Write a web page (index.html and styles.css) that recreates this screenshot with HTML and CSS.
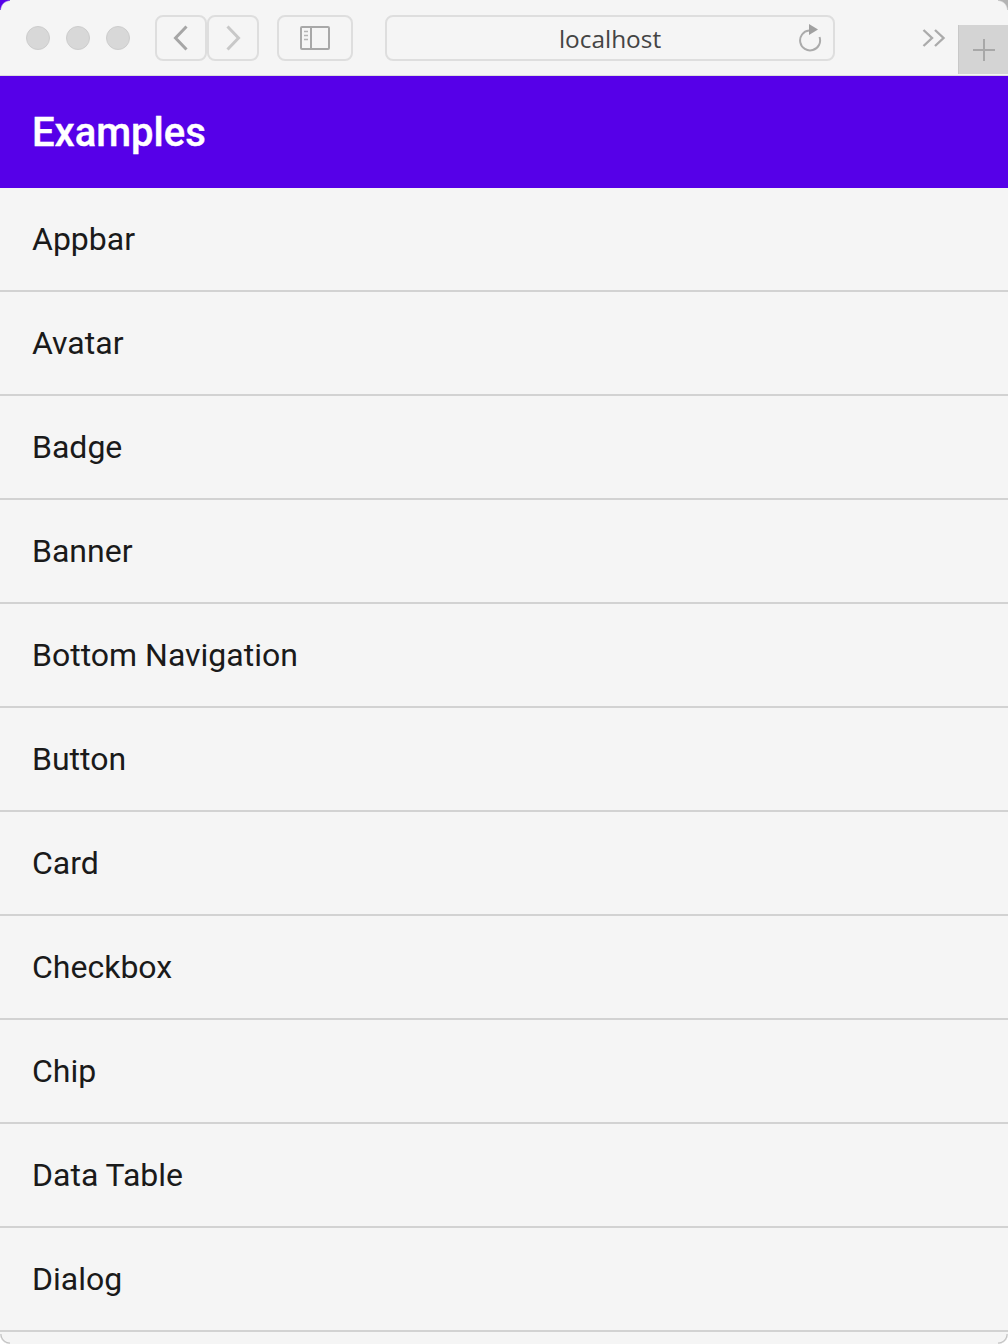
FILE: index.html

```html
<!DOCTYPE html>
<html lang="en">
<head>
	<meta charset="UTF-8" />
	<title>Examples</title>
	<link rel="stylesheet" href="styles.css">
</head>
<body>
	<!-- Browser toolbar -->
	<div class="toolbar">
		<div class="lights">
			<span class="light"></span>
			<span class="light"></span>
			<span class="light"></span>
		</div>
		<div class="nav-buttons">
			<div class="tool-btn nav-btn">
				<svg width="16" height="26" viewBox="0 0 16 26"><path d="M13.5 1.5 L2.5 13 L13.5 24.5" fill="none" stroke="#a6a6a6" stroke-width="3"/></svg>
			</div>
			<div class="tool-btn nav-btn">
				<svg width="16" height="26" viewBox="0 0 16 26"><path d="M2.5 1.5 L13.5 13 L2.5 24.5" fill="none" stroke="#c8c8c8" stroke-width="3"/></svg>
			</div>
		</div>
		<div class="tool-btn sidebar-btn">
			<svg width="30" height="24" viewBox="0 0 30 24">
				<rect x="1" y="1" width="28" height="22" rx="1" fill="none" stroke="#a8a8a8" stroke-width="2"/>
				<path d="M11 1 V23" stroke="#a8a8a8" stroke-width="2"/>
				<path d="M4 5.5 H8 M4 9.5 H8 M4 13.5 H8" stroke="#b4b4b4" stroke-width="1.6"/>
			</svg>
		</div>
		<div class="address">
			<span class="address-text">localhost</span>
			<svg class="reload" width="24" height="30" viewBox="0 0 24 30">
				<path d="M11 7.5 A10 10 0 1 0 21.5 14" fill="none" stroke="#ababab" stroke-width="2"/>
				<path d="M11 1 L20 6.5 L11 12 Z" fill="#a0a0a0"/>
			</svg>
		</div>
		<svg class="more" width="24" height="20" viewBox="0 0 24 20">
			<path d="M1.5 2 L10 10 L1.5 18 M13 2 L21.5 10 L13 18" fill="none" stroke="#ababab" stroke-width="2.4"/>
		</svg>
		<div class="new-tab">
			<svg width="24" height="24" viewBox="0 0 24 24"><path d="M12 1 V23 M1 12 H23" stroke="#a8a8a8" stroke-width="2"/></svg>
		</div>
	</div>

	<!-- App -->
	<header class="appbar">
		<h1 class="title">Examples</h1>
	</header>
	<ul class="list">
		<li class="list-item">Appbar</li>
		<li class="list-item">Avatar</li>
		<li class="list-item">Badge</li>
		<li class="list-item">Banner</li>
		<li class="list-item">Bottom Navigation</li>
		<li class="list-item">Button</li>
		<li class="list-item">Card</li>
		<li class="list-item">Checkbox</li>
		<li class="list-item">Chip</li>
		<li class="list-item">Data Table</li>
		<li class="list-item">Dialog</li>
	</ul>

	<!-- Window corners -->
	<span class="corner corner-tl"></span>
	<span class="corner corner-tr"></span>
	<span class="corner corner-bl"></span>
	<span class="corner corner-br"></span>
</body>
</html>
```

FILE: styles.css

```css
:root {
	--primary: #5600e8;
	--surface: #f5f5f5;
	--line: #d2d2d2;
	--text: #1a1a1a;
}

* {
	margin: 0;
	padding: 0;
	box-sizing: border-box;
}

html, body {
	height: 100%;
	overflow: hidden;
}

body {
	position: relative;
	background: var(--surface);
	font-family: Roboto, sans-serif;
	color: var(--text);
}

/* Toolbar */
.toolbar {
	display: flex;
	align-items: center;
	height: 76px;
	padding-left: 26px;
	background: var(--surface);
	border-bottom: 1px solid #dcdcdc;
}

.lights {
	display: flex;
	gap: 16px;
	margin-right: 25px;
}

.light {
	width: 24px;
	height: 24px;
	border-radius: 50%;
	background: #d8d8d8;
	border: 1px solid #cdcdcd;
}

.nav-buttons {
	display: flex;
	margin-right: 18px;
}

.tool-btn {
	display: flex;
	align-items: center;
	justify-content: center;
	height: 46px;
	border: 2px solid #dedede;
	border-radius: 8px;
}

.nav-btn {
	width: 52px;
}

.sidebar-btn {
	width: 76px;
	margin-right: 32px;
}

.address {
	position: relative;
	display: flex;
	align-items: center;
	justify-content: center;
	width: 450px;
	height: 46px;
	border: 2px solid #dedede;
	border-radius: 8px;
}

.address-text {
	font-family: "Open Sans", sans-serif;
	font-size: 24.4px;
	color: #444;
	padding-top: 2px;
}

.reload {
	position: absolute;
	right: 11px;
	top: 6px;
}

.more {
	margin-left: 87px;
	margin-right: 12px;
}

.new-tab {
	display: flex;
	align-items: center;
	justify-content: center;
	flex: 1;
	align-self: flex-end;
	height: 49px;
	margin-bottom: 1px;
	background: #d4d4d4;
	border-left: 1px solid #c8c8c8;
}

/* App bar */
.appbar {
	display: flex;
	align-items: center;
	height: 112px;
	padding-left: 32px;
	background: var(--primary);
}

.title {
	font-size: 40px;
	font-weight: 500;
	color: #fff;
	-webkit-text-stroke: 0.4px #fff;
}

/* List */
.list {
	list-style: none;
}

.list-item {
	display: flex;
	align-items: center;
	height: 104px;
	padding-left: 32px;
	border-bottom: 2px solid var(--line);
	font-size: 32px;
}

/* Window corners */
.corner {
	position: absolute;
	width: 10px;
	height: 10px;
}

.corner-tl {
	top: 0;
	left: 0;
	background: radial-gradient(circle at 100% 100%, transparent 8.5px, var(--primary) 10px);
}

.corner-tr {
	top: 0;
	right: 0;
	background: radial-gradient(circle at 0 100%, transparent 8.5px, #b4b4b4 10px);
}

.corner-bl {
	bottom: 0;
	left: 0;
	background: radial-gradient(circle at 100% 0, transparent 8px, #bdbdbd 9px, #fff 10.5px);
}

.corner-br {
	bottom: 0;
	right: 0;
	background: radial-gradient(circle at 0 0, transparent 8px, #bdbdbd 9px, #fff 10.5px);
}
```
